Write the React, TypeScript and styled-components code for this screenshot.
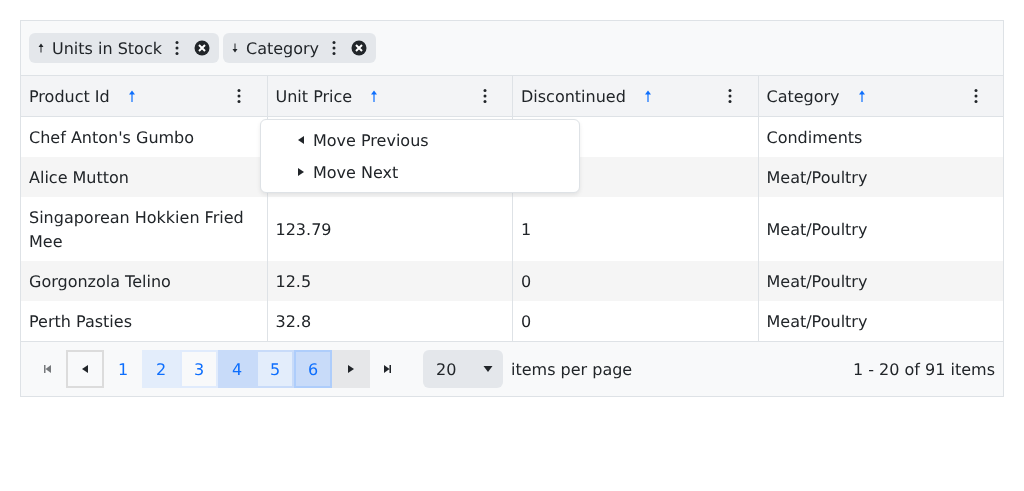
import React from "react";
import styled, { createGlobalStyle } from "styled-components";

const Global = createGlobalStyle`
  html, body { margin: 0; padding: 0; background: #fff; }
  body { font-family: "DejaVu Sans", "Liberation Sans", sans-serif; font-size: 16px; color: #212529; text-rendering: geometricPrecision; }
`;

const Page = styled.div`
  padding: 20px;
  width: 1024px;
  height: 491px;
  box-sizing: border-box;
  overflow: hidden;
  will-change: transform;
`;

const Grid = styled.div`
  position: relative;
  width: 984px;
  height: 377px;
  box-sizing: border-box;
  border: 1px solid #dee2e6;
  background: #fff;
`;

const GroupBar = styled.div`
  display: flex;
  align-items: center;
  gap: 4px;
  height: 55px;
  padding: 0 8px 0;
  box-sizing: border-box;
  background: #f8f9fa;
  border-bottom: 1px solid #dee2e6;
`;

const Chip = styled.div<{ $w: number }>`
  display: flex;
  align-items: center;
  width: ${(p) => p.$w}px;
  height: 30px;
  box-sizing: border-box;
  padding: 0 9px 0 6px;
  background: #e4e7eb;
  border-radius: 6px;
  line-height: 24px;
`;

const ChipLabel = styled.span`
  margin-left: 5px;
  padding-top: 1px;
  flex: 1;
  white-space: nowrap;
`;

const ChipMenu = styled.span`
  display: flex;
  margin-right: 9px;
`;

const Row = styled.div<{ $h: number; $alt?: boolean; $head?: boolean }>`
  display: grid;
  grid-template-columns: repeat(4, 245.5px);
  height: ${(p) => p.$h}px;
  background: ${(p) => (p.$head ? "#f3f4f6" : p.$alt ? "#f5f5f5" : "#fff")};
  box-sizing: border-box;
  border-bottom: ${(p) => (p.$head ? "1px solid #dee2e6" : "none")};
`;

const Cell = styled.div`
  display: flex;
  align-items: center;
  padding: 1px 8px 0;
  box-sizing: border-box;
  line-height: 24px;
  & + & { border-left: 1px solid #dee2e6; }
`;

const HeadCell = styled(Cell)`
  position: relative;
  padding-right: 19.5px;
`;

const HeadTitle = styled.span`
  white-space: nowrap;
`;

const SortIcon = styled.span`
  display: flex;
  margin-left: 14px;
  margin-top: -1px;
  color: #0d6efd;
`;

const HeadMenu = styled.span`
  display: flex;
  margin-left: auto;
  margin-top: -1px;
`;

const Pager = styled.div`
  display: flex;
  align-items: center;
  height: 55px;
  padding: 0 8px 0 7px;
  box-sizing: border-box;
  background: #f8f9fa;
  border-top: 1px solid #dee2e6;
  color: #212529;
`;

const PageBtn = styled.div<{ $bg?: string; $bd?: string; $bw?: number; $dim?: boolean }>`
  width: 38px;
  height: 38px;
  box-sizing: border-box;
  display: flex;
  align-items: center;
  justify-content: center;
  color: #0d6efd;
  opacity: ${(p) => (p.$dim ? 0.6 : 1)};
  background: ${(p) => p.$bg ?? "transparent"};
  border: ${(p) => p.$bw ?? 2}px solid ${(p) => p.$bd ?? p.$bg ?? "transparent"};
`;

const IconBtn = styled(PageBtn)`
  color: #212529;
`;

const SizeSelect = styled.div`
  display: flex;
  align-items: center;
  justify-content: space-between;
  width: 80px;
  height: 38px;
  margin-left: 15px;
  padding: 0 10px 0 13px;
  box-sizing: border-box;
  background: #e4e7eb;
  border-radius: 6px;
`;

const PerPage = styled.span`
  margin-left: 8px;
`;

const Info = styled.span`
  margin-left: auto;
`;

const Popup = styled.div`
  position: absolute;
  left: 239px;
  top: 98px;
  width: 320px;
  height: 74px;
  box-sizing: border-box;
  padding: 4px 0;
  background: #fff;
  border: 1px solid #dee2e6;
  border-radius: 6px;
  box-shadow: 0 2px 4px rgba(0, 0, 0, 0.08);
`;

const PopupItem = styled.div`
  display: flex;
  align-items: center;
  height: 32px;
  padding-left: 36px;
  gap: 8px;
`;

const Up = () => (
  <svg width="16" height="16" viewBox="0 0 16 16" fill="currentColor">
    <path d="M8 2.5 11 6.5H8.6V14H7.4V6.5H5Z" />
  </svg>
);
const Small = ({ down }: { down?: boolean }) => (
  <svg width="12" height="16" viewBox="0 0 12 16" fill="currentColor">
    <path d={down ? "M6 12.5 3.5 9H5.5V3.5H6.5V9H8.5Z" : "M6 3.5 8.5 7H6.5V12.5H5.5V7H3.5Z"} />
  </svg>
);
const Dots = () => (
  <svg width="16" height="16" viewBox="0 0 16 16" fill="#212529">
    <circle cx="8" cy="2.5" r="1.5" />
    <circle cx="8" cy="8" r="1.5" />
    <circle cx="8" cy="13.5" r="1.5" />
  </svg>
);
const XCircle = () => (
  <svg width="16" height="16" viewBox="0 0 16 16">
    <circle cx="8" cy="8" r="7.5" fill="#212529" />
    <path d="M5 5 11 11M11 5 5 11" stroke="#fff" strokeWidth="2" />
  </svg>
);
const Tri = ({ dir }: { dir: "l" | "r" }) => (
  <svg width="8" height="16" viewBox="0 0 8 16" fill="currentColor">
    <path d={dir === "l" ? "M7 4V12L1 8Z" : "M1 4V12L7 8Z"} />
  </svg>
);
const Edge = ({ dir }: { dir: "l" | "r" }) => (
  <svg width="16" height="16" viewBox="0 0 16 16" fill="currentColor">
    {dir === "l" ? (
      <path d="M5 4H6.5V12H5ZM12 4V12L6.5 8Z" />
    ) : (
      <path d="M3 4V12L8.5 8ZM8.5 4H10V12H8.5Z" />
    )}
  </svg>
);
const Caret = () => (
  <svg width="10" height="16" viewBox="0 0 10 16" fill="#212529">
    <path d="M0.5 5H9.5L5 11Z" />
  </svg>
);

const heads = ["Product Id", "Unit Price", "Discontinued", "Category"];
const rows: { c: string[]; h: number; alt?: boolean }[] = [
  { c: ["Chef Anton's Gumbo", "", "", "Condiments"], h: 40 },
  { c: ["Alice Mutton", "", "", "Meat/Poultry"], h: 40, alt: true },
  { c: ["Singaporean Hokkien Fried Mee", "123.79", "1", "Meat/Poultry"], h: 64 },
  { c: ["Gorgonzola Telino", "12.5", "0", "Meat/Poultry"], h: 40, alt: true },
  { c: ["Perth Pasties", "32.8", "0", "Meat/Poultry"], h: 40 },
];

export default function App() {
  return (
    <Page>
      <Global />
      <Grid>
        <GroupBar>
          <Chip $w={190}>
            <Small />
            <ChipLabel>Units in Stock</ChipLabel>
            <ChipMenu><Dots /></ChipMenu>
            <XCircle />
          </Chip>
          <Chip $w={153}>
            <Small down />
            <ChipLabel>Category</ChipLabel>
            <ChipMenu><Dots /></ChipMenu>
            <XCircle />
          </Chip>
        </GroupBar>
        <Row $h={41} $head>
          {heads.map((h) => (
            <HeadCell key={h}>
              <HeadTitle>{h}</HeadTitle>
              <SortIcon><Up /></SortIcon>
              <HeadMenu><Dots /></HeadMenu>
            </HeadCell>
          ))}
        </Row>
        {rows.map((r) => (
          <Row key={r.c[0]} $h={r.h} $alt={r.alt}>
            {r.c.map((v, i) => (
              <Cell key={i}>{v}</Cell>
            ))}
          </Row>
        ))}
        <Pager>
          <IconBtn $dim><Edge dir="l" /></IconBtn>
          <IconBtn $bd="#dcdcdc"><Tri dir="l" /></IconBtn>
          <PageBtn>1</PageBtn>
          <PageBtn $bg="#e3edfb">2</PageBtn>
          <PageBtn $bg="#f8f9fa" $bd="#e0ebfc" $bw={2}>3</PageBtn>
          <PageBtn $bg="#c8dbf9">4</PageBtn>
          <PageBtn $bg="#e3edfb" $bd="#c8dbf9">5</PageBtn>
          <PageBtn $bg="#c8dbf9" $bd="#aecdfb">6</PageBtn>
          <IconBtn $bg="#e6e7e9"><Tri dir="r" /></IconBtn>
          <IconBtn><Edge dir="r" /></IconBtn>
          <SizeSelect>
            <span>20</span>
            <Caret />
          </SizeSelect>
          <PerPage>items per page</PerPage>
          <Info>1 - 20 of 91 items</Info>
        </Pager>
        <Popup>
          <PopupItem><Tri dir="l" />Move Previous</PopupItem>
          <PopupItem><Tri dir="r" />Move Next</PopupItem>
        </Popup>
      </Grid>
    </Page>
  );
}
